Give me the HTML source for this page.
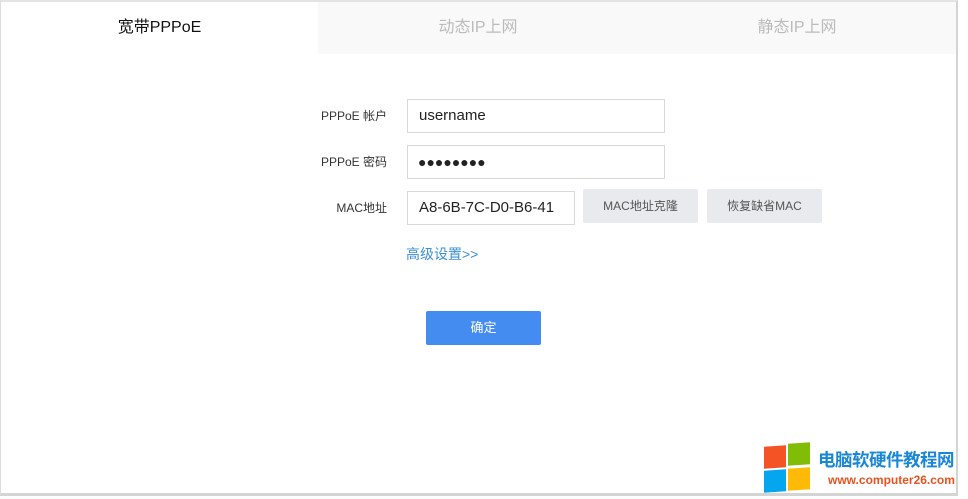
<!DOCTYPE html>
<html><head><meta charset="utf-8"><style>
*{margin:0;padding:0;box-sizing:border-box}
body{width:968px;height:499px;background:#fff;position:relative;overflow:hidden;font-family:"Liberation Sans","Noto Sans CJK SC",sans-serif}
.frame{position:absolute;left:0;top:0;width:958px;height:496px;border:1px solid #dcdcdc;border-top:2px solid #e4e4e4;border-right:2px solid #d4d4d4;border-bottom:3px solid #d4d4d4;background:#fff}
.tab{position:absolute;top:2px;height:52px;line-height:52px;text-align:center;font-size:16px}
.lbl{position:absolute;width:120px;left:267px;text-align:right;font-size:12px;color:#333}
.inp{position:absolute;left:407px;height:34px;border:1px solid #d9d9d9;background:#fff;font-size:15px;line-height:32px;padding-left:11px;color:#222}
.btn{position:absolute;top:189px;height:34px;width:115px;background:#e8eaee;font-size:12px;color:#555;text-align:center;line-height:34px;border-radius:2px}
.sq{position:absolute;width:22px;height:22px}
</style></head><body>
<div class="frame"></div>
<div class="tab" style="left:1px;width:317px;background:#fff;color:#111">宽带PPPoE</div>
<div class="tab" style="left:318px;width:320px;background:#f9f9fa;color:#bbb">动态IP上网</div>
<div class="tab" style="left:638px;width:318px;background:#f9f9fa;color:#bbb">静态IP上网</div>

<div class="lbl" style="top:107px">PPPoE 帐户</div>
<div class="inp" style="top:99px;width:258px">username</div>
<div class="lbl" style="top:153px">PPPoE 密码</div>
<div class="inp" style="top:145px;width:258px;font-size:14px;padding-left:10px">●●●●●●●●</div>
<div class="lbl" style="top:199px">MAC地址</div>
<div class="inp" style="top:191px;width:168px">A8-6B-7C-D0-B6-41</div>
<div class="btn" style="left:583px">MAC地址克隆</div>
<div class="btn" style="left:707px">恢复缺省MAC</div>
<div style="position:absolute;left:406px;top:244px;font-size:14px;color:#3d8fd6">高级设置&gt;&gt;</div>
<div style="position:absolute;left:426px;top:311px;width:115px;height:34px;background:#448cef;color:#fff;font-size:13px;text-align:center;line-height:34px;border-radius:2px">确定</div>

<div class="sq" style="left:764px;top:446px;background:#f35325;transform:skewY(-4deg)"></div>
<div class="sq" style="left:788px;top:443px;background:#81bc06;transform:skewY(-4deg)"></div>
<div class="sq" style="left:764px;top:470px;background:#05a6f0;transform:skewY(-4deg)"></div>
<div class="sq" style="left:788px;top:468px;background:#ffba08;transform:skewY(-4deg)"></div>
<div style="position:absolute;left:818px;top:447px;font-size:17.5px;font-weight:bold;color:#1a87d6;letter-spacing:-0.5px">电脑软硬件教程网</div>
<div style="position:absolute;left:828px;top:473px;font-size:12px;font-weight:bold;color:#e8531f">www.computer26.com</div>
</body></html>
